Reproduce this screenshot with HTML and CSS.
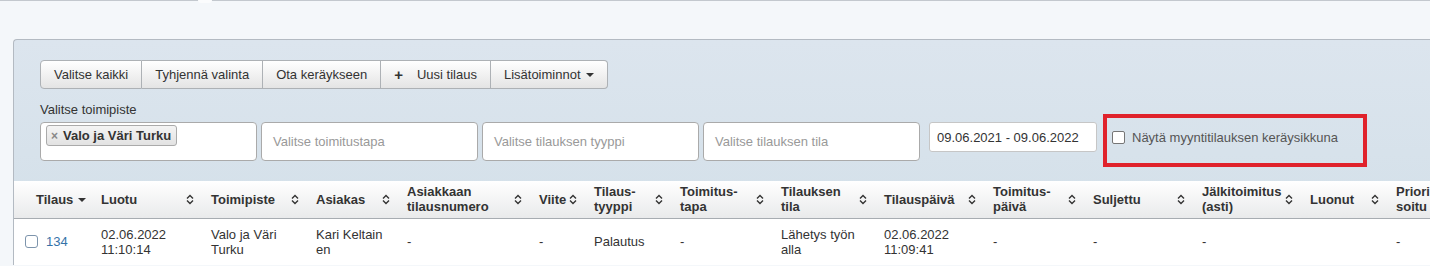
FILE: index.html
```html
<!DOCTYPE html>
<html lang="fi">
<head>
    <meta charset="UTF-8">
    <meta name="viewport" content="width=device-width, initial-scale=1.0">
    <title>Tilaukset</title>
    <link rel="stylesheet" href="styles.css">
</head>
<body>
    <div class="topline"><span class="notch"></span></div>
    <div class="page">
        <div class="panel">
            <div class="toolbar">
                <div class="btn-group">
                    <button class="btn">Valitse kaikki</button>
                    <button class="btn">Tyhjennä valinta</button>
                    <button class="btn">Ota keräykseen</button>
                    <button class="btn"><span class="plus">+</span>Uusi tilaus</button>
                    <button class="btn">Lisätoiminnot <span class="caret"></span></button>
                </div>

                <label class="field-label">Valitse toimipiste</label>
                <div class="filters">
                    <div class="select multi">
                        <span class="tag"><span class="tag-x">×</span>Valo ja Väri Turku</span>
                    </div>
                    <div class="select"><span class="placeholder">Valitse toimitustapa</span></div>
                    <div class="select"><span class="placeholder">Valitse tilauksen tyyppi</span></div>
                    <div class="select"><span class="placeholder">Valitse tilauksen tila</span></div>
                    <input type="text" class="date-input" value="09.06.2021 - 09.06.2022">
                    <div class="highlight">
                        <label class="check-label"><input type="checkbox" class="check"> Näytä myyntitilauksen keräysikkuna</label>
                    </div>
                </div>
            </div>

            <table class="orders">
                <colgroup>
                    <col style="width:79px"><col style="width:110px"><col style="width:105px">
                    <col style="width:91px"><col style="width:132px"><col style="width:55px">
                    <col style="width:86px"><col style="width:101px"><col style="width:103px">
                    <col style="width:109px"><col style="width:100px"><col style="width:109px">
                    <col style="width:108px"><col style="width:86px"><col style="width:100px">
                </colgroup>
                <thead>
                    <tr>
                        <th class="first"><div class="th-in"><span>Tilaus<span class="caret"></span></span></div></th>
                        <th><div class="th-in"><span>Luotu</span><svg class="sort" viewBox="0 0 8 11"><path d="M1 4.5 4 1.5 7 4.5M1 6.5 4 9.5 7 6.5"/></svg></div></th>
                        <th><div class="th-in"><span>Toimipiste</span><svg class="sort" viewBox="0 0 8 11"><path d="M1 4.5 4 1.5 7 4.5M1 6.5 4 9.5 7 6.5"/></svg></div></th>
                        <th><div class="th-in"><span>Asiakas</span><svg class="sort" viewBox="0 0 8 11"><path d="M1 4.5 4 1.5 7 4.5M1 6.5 4 9.5 7 6.5"/></svg></div></th>
                        <th><div class="th-in"><span>Asiakkaan<br>tilausnumero</span><svg class="sort" viewBox="0 0 8 11"><path d="M1 4.5 4 1.5 7 4.5M1 6.5 4 9.5 7 6.5"/></svg></div></th>
                        <th><div class="th-in"><span>Viite</span><svg class="sort" viewBox="0 0 8 11"><path d="M1 4.5 4 1.5 7 4.5M1 6.5 4 9.5 7 6.5"/></svg></div></th>
                        <th><div class="th-in"><span>Tilaus-<br>tyyppi</span><svg class="sort" viewBox="0 0 8 11"><path d="M1 4.5 4 1.5 7 4.5M1 6.5 4 9.5 7 6.5"/></svg></div></th>
                        <th><div class="th-in"><span>Toimitus-<br>tapa</span><svg class="sort" viewBox="0 0 8 11"><path d="M1 4.5 4 1.5 7 4.5M1 6.5 4 9.5 7 6.5"/></svg></div></th>
                        <th><div class="th-in"><span>Tilauksen<br>tila</span><svg class="sort" viewBox="0 0 8 11"><path d="M1 4.5 4 1.5 7 4.5M1 6.5 4 9.5 7 6.5"/></svg></div></th>
                        <th><div class="th-in"><span>Tilauspäivä</span><svg class="sort" viewBox="0 0 8 11"><path d="M1 4.5 4 1.5 7 4.5M1 6.5 4 9.5 7 6.5"/></svg></div></th>
                        <th><div class="th-in"><span>Toimitus-<br>päivä</span><svg class="sort" viewBox="0 0 8 11"><path d="M1 4.5 4 1.5 7 4.5M1 6.5 4 9.5 7 6.5"/></svg></div></th>
                        <th><div class="th-in"><span>Suljettu</span><svg class="sort" viewBox="0 0 8 11"><path d="M1 4.5 4 1.5 7 4.5M1 6.5 4 9.5 7 6.5"/></svg></div></th>
                        <th><div class="th-in"><span>Jälkitoimitus<br>(asti)</span><svg class="sort" viewBox="0 0 8 11"><path d="M1 4.5 4 1.5 7 4.5M1 6.5 4 9.5 7 6.5"/></svg></div></th>
                        <th><div class="th-in"><span>Luonut</span><svg class="sort" viewBox="0 0 8 11"><path d="M1 4.5 4 1.5 7 4.5M1 6.5 4 9.5 7 6.5"/></svg></div></th>
                        <th><div class="th-in"><span>Priori<br>soitu</span><svg class="sort" viewBox="0 0 8 11"><path d="M1 4.5 4 1.5 7 4.5M1 6.5 4 9.5 7 6.5"/></svg></div></th>
                    </tr>
                </thead>
                <tbody>
                    <tr>
                        <td class="first"><span class="row-check"></span><a href="#" class="order-link">134</a></td>
                        <td>02.06.2022<br>11:10:14</td>
                        <td>Valo ja Väri Turku</td>
                        <td class="break">Kari Keltainen</td>
                        <td>-</td>
                        <td>-</td>
                        <td>Palautus</td>
                        <td>-</td>
                        <td>Lähetys työn alla</td>
                        <td>02.06.2022<br>11:09:41</td>
                        <td>-</td>
                        <td>-</td>
                        <td>-</td>
                        <td></td>
                        <td>-</td>
                    </tr>
                </tbody>
            </table>
        </div>
    </div>
</body>
</html>
```

FILE: styles.css
```css
* {
    margin: 0;
    padding: 0;
    box-sizing: border-box;
}

body {
    font-family: 'Liberation Sans', Arial, sans-serif;
    font-size: 13px;
    color: #333;
    background: #f4f7fa;
    overflow: hidden;
}

.topline {
    position: relative;
    height: 1px;
    background: #c3c8ce;
}

.notch {
    position: absolute;
    left: 198px;
    top: 0;
    width: 14px;
    height: 3px;
    background: #fbfcfd;
    border-radius: 0 0 7px 7px;
}

.page {
    padding: 38px 0 0 13px;
}

.panel {
    border: 1px solid #b3bac2;
    border-right: none;
    border-bottom: none;
    border-radius: 4px 0 0 0;
    background: linear-gradient(#dce5ee, #d2dfe8);
    overflow: hidden;
}

.toolbar {
    padding: 20px 0 14px 26px;
}

/* button group */
.btn-group {
    display: inline-flex;
}

.btn {
    font-family: inherit;
    font-size: 13px;
    color: #333;
    height: 29px;
    padding: 0 13px;
    border: 1px solid #adb1b5;
    border-left: none;
    background: linear-gradient(#ffffff, #e4e4e4);
    display: flex;
    align-items: center;
    cursor: pointer;
}

.btn:first-child {
    border-left: 1px solid #adb1b5;
    border-radius: 4px 0 0 4px;
}

.btn:last-child {
    border-radius: 0 4px 4px 0;
}

.plus {
    font-weight: bold;
    font-size: 15px;
    margin-right: 14px;
}

.caret {
    display: inline-block;
    width: 0;
    height: 0;
    margin-left: 5px;
    vertical-align: middle;
    border-left: 4px solid transparent;
    border-right: 4px solid transparent;
    border-top: 4px solid #333;
}

.field-label {
    display: block;
    margin-top: 12px;
    line-height: 17px;
    margin-bottom: 4px;
}

/* filter row */
.filters {
    display: flex;
    align-items: flex-start;
}

.select {
    width: 217px;
    height: 39px;
    margin-right: 4px;
    background: #fff;
    border: 1px solid #aaa;
    border-radius: 4px;
    display: flex;
    align-items: center;
    padding: 0 11px;
}

.select.multi {
    align-items: flex-start;
    padding: 2px 5px;
}

.placeholder {
    color: #999;
}

.tag {
    display: inline-flex;
    align-items: center;
    height: 21px;
    padding: 0 5px 0 4px;
    border: 1px solid #aaa;
    border-radius: 3px;
    background: linear-gradient(#f4f4f4, #e2e2e2);
    font-weight: bold;
    color: #333;
}

.tag-x {
    color: #888;
    font-size: 12px;
    margin-right: 5px;
}

.date-input {
    width: 168px;
    height: 30px;
    margin-left: 5px;
    padding: 0 7px;
    border: 1px solid #c6c6c6;
    border-radius: 3px;
    font-family: inherit;
    font-size: 13px;
    color: #333;
}

.highlight {
    margin: -8px 0 0 6px;
    width: 264px;
    height: 53px;
    border: 4px solid #e0222b;
    padding: 12px 0 0 5px;
}

.check-label {
    display: flex;
    align-items: center;
    color: #555;
}

.check {
    appearance: none;
    width: 13px;
    height: 13px;
    margin-right: 7px;
    border: 1px solid #767676;
    border-radius: 2px;
    background: #fff;
}

/* table */
.orders {
    table-layout: fixed;
    border-collapse: collapse;
    width: 1474px;
    background: #fff;
}

.orders th {
    height: 37px;
    padding: 0 9px 0 8px;
    text-align: left;
    font-weight: bold;
    line-height: 15px;
    background: linear-gradient(#ffffff, #e9eaeb);
    border-bottom: 1px solid #a7acb1;
    white-space: nowrap;
}

.orders th.first {
    padding-left: 22px;
}

.th-in {
    display: flex;
    justify-content: space-between;
    align-items: center;
}

.sort {
    width: 8px;
    height: 11px;
    flex-shrink: 0;
    fill: none;
    stroke: #333;
    stroke-width: 1.4;
}

.orders td {
    padding: 8px;
    line-height: 15px;
    vertical-align: middle;
    height: 46px;
}

.orders td.first {
    padding-left: 11px;
}

.orders td.break {
    padding-right: 13px;
    word-break: break-all;
}

.row-check {
    display: inline-block;
    width: 13px;
    height: 13px;
    border: 1px solid #7d94ac;
    border-radius: 3px;
    vertical-align: -2px;
    margin-right: 8px;
}

.order-link {
    color: #3572a8;
    text-decoration: none;
}
```
